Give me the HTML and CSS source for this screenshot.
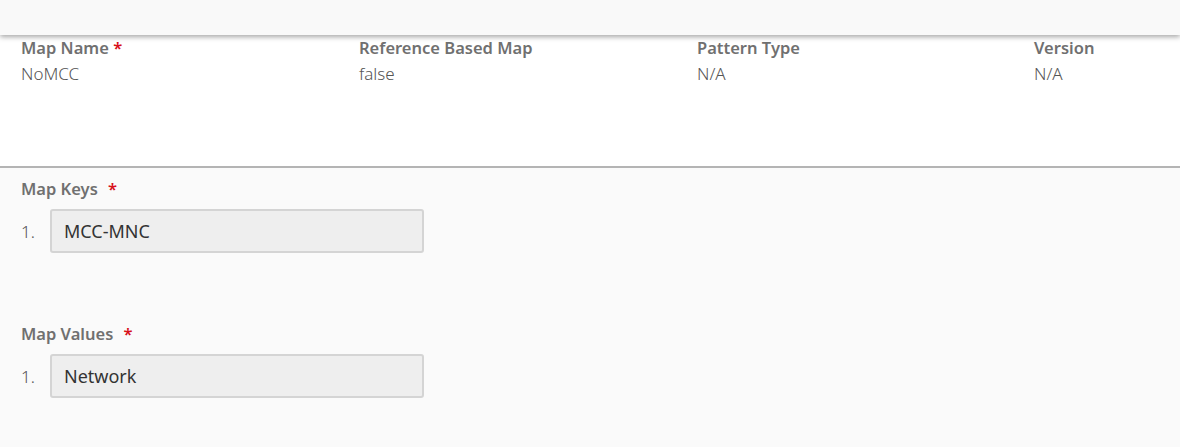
FILE: index.html
```html
<!DOCTYPE html>
<html>
<head>
<meta charset="utf-8">
<link rel="stylesheet" href="styles.css">
</head>
<body>
<div class="topbar"></div>
<div class="summary">
  <div class="field">
    <div class="label">Map Name <span class="req">*</span></div>
    <div class="value">NoMCC</div>
  </div>
  <div class="field">
    <div class="label">Reference Based Map</div>
    <div class="value">false</div>
  </div>
  <div class="field">
    <div class="label">Pattern Type</div>
    <div class="value">N/A</div>
  </div>
  <div class="field">
    <div class="label">Version</div>
    <div class="value">N/A</div>
  </div>
</div>
<div class="details">
  <div class="group">
    <div class="glabel">Map Keys <span class="req">*</span></div>
    <div class="row">
      <span class="num">1.</span>
      <div class="box">MCC-MNC</div>
    </div>
  </div>
  <div class="group">
    <div class="glabel">Map Values <span class="req">*</span></div>
    <div class="row">
      <span class="num">1.</span>
      <div class="box">Network</div>
    </div>
  </div>
</div>
</body>
</html>
```

FILE: styles.css
```css
html, body {
  margin: 0;
  padding: 0;
  background: #fafafa;
  font-family: "Noto Sans", "Open Sans", sans-serif;
  overflow: hidden;
}
.topbar {
  height: 35px;
  background: #f9f9f9;
  box-shadow: 0 2px 5px rgba(0,0,0,0.35);
  position: relative;
  z-index: 1;
}
.summary {
  background: #fff;
  border-bottom: 2px solid #b4b4b4;
  display: grid;
  grid-template-columns: 338px 338px 337px 1fr;
  padding: 1px 0 0 21px;
  box-sizing: border-box;
  height: 133px;
}
.label {
  font-size: 16.5px;
  font-weight: 600;
  color: #707070;
  line-height: 24px;
  white-space: nowrap;
}
.req {
  color: #d7101a;
}
.value {
  font-size: 17px;
  font-weight: 300;
  color: #555;
  line-height: 24px;
  margin-top: 2px;
}
.details {
  padding: 9px 0 0 21px;
}
.group {
  margin-bottom: 69px;
}
.group:last-child {
  margin-bottom: 0;
}
.glabel {
  font-size: 16.5px;
  font-weight: 600;
  color: #707070;
  line-height: 24px;
}
.glabel .req {
  margin-left: 6px;
}
.row {
  display: flex;
  align-items: center;
  margin-top: 8px;
}
.num {
  width: 29px;
  font-size: 17px;
  font-weight: 300;
  color: #555;
}
.box {
  width: 374px;
  height: 44px;
  box-sizing: border-box;
  background: #eeeeee;
  border: 2px solid #d4d4d4;
  border-radius: 3px;
  padding: 0 12px;
  display: flex;
  align-items: center;
  font-size: 18px;
  color: #333;
}
```
